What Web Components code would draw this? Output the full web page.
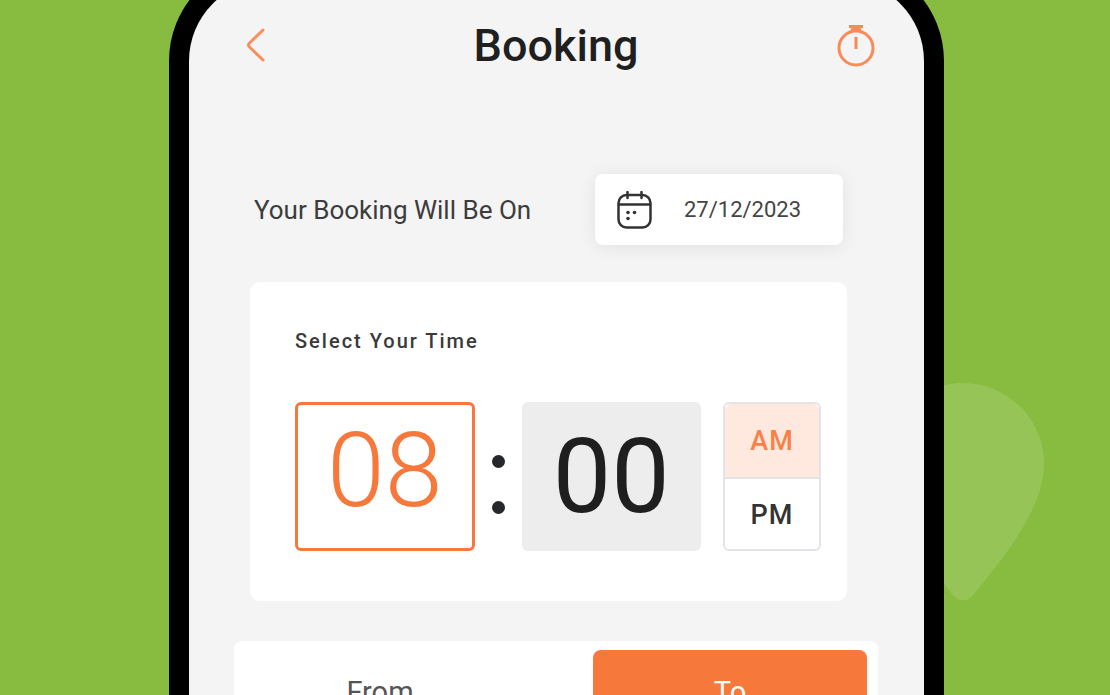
<!DOCTYPE html>
<html lang="en">
<head>
<meta charset="utf-8">
<meta name="viewport" content="width=device-width, initial-scale=1">
<title>Booking</title>
<style>
  html, body { margin: 0; height: 100%; }
  body {
    --accent: #f6793b;
    --ink: #1f1f1f;
    --surface: #f4f4f4;
    background: #88bc40;
    color: var(--ink);
    font-family: Roboto, "Liberation Sans", sans-serif;
  }
</style>
</head>
<body>
<booking-stage>
  <phone-frame>
    <app-header>Booking</app-header>
    <booking-date value="27/12/2023">Your Booking Will Be On</booking-date>
    <time-card hours="08" minutes="00">Select Your Time</time-card>
    <range-tabs></range-tabs>
  </phone-frame>
</booking-stage>

<script>
function define(name, markup, setup) {
  customElements.define(name, class extends HTMLElement {
    constructor() {
      super();
      this.attachShadow({ mode: 'open' });
    }
    connectedCallback() {
      this.shadowRoot.innerHTML = `<style>
        *, *::before, *::after { box-sizing: border-box; }
        button, input { font: inherit; color: inherit; margin: 0; padding: 0; border: 0; background: none; }
        button { cursor: pointer; }
        svg { display: block; }
      </style>` + markup;
      if (setup) setup(this, this.shadowRoot);
    }
  });
}

/* Green backdrop with a faint map pin behind the phone */
define('booking-stage', `
  <style>
    :host { display: block; position: relative; box-sizing: border-box; height: 100vh; overflow: hidden; padding: 0 166px 0 169px; }
    .pin { position: absolute; top: 383px; right: 66px; width: 162px; height: 218px; }
    ::slotted(*) { position: relative; }
  </style>
  <svg class="pin" viewBox="0 0 162 218" aria-hidden="true">
    <path fill="#97c456" d="M81 0C126 0 162 37 162 80C162 122 130 165 91 212C85 219 77 219 71 212C32 165 0 122 0 80C0 37 36 0 81 0Z"/>
  </svg>
  <slot></slot>
`);

define('phone-frame', `
  <style>
    :host { display: block; margin-top: -40px; border: 20px solid #000; border-radius: 101px; background: #000; }
    .screen { min-height: 900px; padding-top: 20px; border-radius: 81px; background: var(--surface); }
  </style>
  <div class="screen"><slot></slot></div>
`);

define('app-header', `
  <style>
    :host { display: grid; grid-template-columns: 40px 1fr 40px; align-items: center; height: 92px; padding: 0 48px 0 47px; }
    h1 { margin: 0; text-align: center; font-size: 45px; line-height: 56px; font-weight: 500; }
    button { width: 40px; height: 48px; display: grid; place-items: center; color: var(--accent); }
  </style>
  <button type="button" aria-label="Back">
    <svg width="20" height="38" viewBox="0 0 20 38" fill="none" stroke="#fb8e5b" stroke-width="3" stroke-linecap="round" stroke-linejoin="round"><path d="M17 3L3 16.500Q2 18 3 19.500L17 33"/></svg>
  </button>
  <h1><slot></slot></h1>
  <button type="button" aria-label="Timer">
    <svg width="38" height="44" viewBox="0 0 38 44" fill="none" stroke="#fa8b57" stroke-width="3"><circle cx="19" cy="24" r="17"/><path d="M12 2.500H26M19 13V25"/><path d="M14 6Q19 4 24 6" stroke-width="3"/></svg>
  </button>
`);

define('booking-date', `
  <style>
    :host { display: flex; align-items: center; justify-content: space-between; margin: 82px 81px 0 65px; }
    label { font-size: 26px; line-height: 32px; color: #3c3c3c; }
    button { display: flex; align-items: center; gap: 32px; width: 248px; height: 71px; padding: 0 22px; border-radius: 8px; background: #fff; box-shadow: 0 2px 18px rgba(0,0,0,.08); font-size: 22px; line-height: 28px; color: #454545; }
  </style>
  <label for="date"><slot></slot></label>
  <button id="date" type="button">
    <svg width="35" height="38" viewBox="0 0 35 38" fill="none" stroke="#333" stroke-width="2.500" stroke-linecap="round"><rect x="1.500" y="4" width="32" height="32.500" rx="8"/><path d="M2 13.500H33M10.500 1V7M24.500 1V7"/><g fill="#333" stroke="none"><circle cx="11" cy="21.500" r="1.800"/><circle cx="17.500" cy="21.500" r="1.800"/><circle cx="11" cy="27.500" r="1.800"/></g></svg>
    <span></span>
  </button>
`, (el, root) => { root.querySelector('span').textContent = el.getAttribute('value'); });

define('time-card', `
  <style>
    :host { display: block; margin: 37px 77px 0 61px; padding: 45px 26px 50px 45px; border-radius: 10px; background: #fff; }
    h2 { margin: 0; font-size: 20px; line-height: 28px; font-weight: 500; letter-spacing: 2px; color: #3a3a3a; }
    .row { display: grid; grid-template-columns: 1fr 47px 1fr 120px; margin-top: 47px; height: 149px; }
    .row > input { min-width: 0; width: 100%; height: 100%; border-radius: 6px; text-align: center; font-size: 104px; line-height: 120px; }
    .hours { border: 3px solid var(--accent); padding-bottom: 12px; color: var(--accent); font-weight: 300; }
    .minutes { background: #ededed; }
    .colon { display: flex; flex-direction: column; align-items: center; justify-content: center; gap: 33px; padding-top: 16px; }
    .colon i { width: 13px; height: 13px; border-radius: 50%; background: #25272a; }
    fieldset { display: grid; grid-template-rows: 1fr 1fr; min-width: 0; margin: 0 0 0 22px; padding: 0; border: 2px solid #e4e3e8; border-radius: 6px; overflow: hidden; }
    label { display: grid; place-items: center; padding-top: 2px; font-size: 27px; line-height: 32px; font-weight: 500; letter-spacing: 1px; cursor: pointer; color: #333; }
    label + label { border-top: 2px solid #e4e3e8; }
    label:has(:checked) { background: #ffe9df; color: #fb8048; }
    label input { appearance: none; position: absolute; width: 0; height: 0; }
  </style>
  <h2><slot></slot></h2>
  <div class="row">
    <input class="hours" inputmode="numeric" aria-label="Hours">
    <span class="colon" aria-hidden="true"><i></i><i></i></span>
    <input class="minutes" inputmode="numeric" aria-label="Minutes">
    <fieldset aria-label="Part of day">
      <label><input type="radio" name="period" checked>AM</label>
      <label><input type="radio" name="period">PM</label>
    </fieldset>
  </div>
`, (el, root) => {
  root.querySelector('.hours').value = el.getAttribute('hours');
  root.querySelector('.minutes').value = el.getAttribute('minutes');
});

define('range-tabs', `
  <style>
    :host { display: grid; grid-template-columns: 1fr 1fr; gap: 76px; margin: 40px 46px 0 45px; padding: 9px 11px 9px 9px; border-radius: 8px; background: #fff; }
    button { height: 84px; border-radius: 8px; font-size: 29px; line-height: 32px; color: #555; }
    button[aria-pressed="true"] { background: var(--accent); color: #fff; }
  </style>
  <button type="button" aria-pressed="false">From</button>
  <button type="button" aria-pressed="true">To</button>
`);
</script>
</body>
</html>
